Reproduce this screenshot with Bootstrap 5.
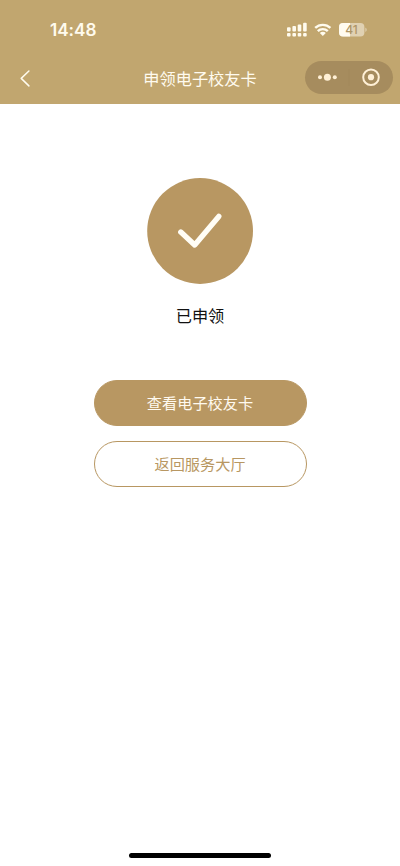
<!DOCTYPE html>
<html lang="zh-CN">
<head>
<meta charset="utf-8">
<meta name="viewport" content="width=device-width, initial-scale=1">
<title>申领电子校友卡</title>
<link href="https://cdn.jsdelivr.net/npm/bootstrap@5.3.0/dist/css/bootstrap.min.css" rel="stylesheet">
<style>
  :root { --gold: #b89762; --bar: #c1a66f; }
  body { font-family: "Noto Sans CJK SC", sans-serif; height: 866px; overflow: hidden; }
  .top-area { background: var(--bar); height: 103.5px; }
  .status-row { height: 54px; padding: 6px 32px 0 50px; }
  .clock { font: 600 17.2px/1 Inter, sans-serif; letter-spacing: -.05px; color: #fffbee; }
  .title-row { display: grid; grid-template-columns: 95px 1fr 95px; height: 47px; padding: 0 7px 0 13px; }
  .page-title { font-size: 16.2px; line-height: 24px; color: #fffbef; padding-right: 6px; }
  .capsule { width: 88px; height: 33px; background: #a68c5e; }
  .result-area { padding-top: 74px; }
  .result-label { font-size: 16.2px; line-height: 24px; margin-top: 19px; color: #111; }
  .actions { width: 213px; margin-top: 53.5px; gap: 15px; }
  .btn-gold { --bs-btn-padding-y: 0; --bs-btn-font-size: 15.2px; --bs-btn-border-color: var(--gold); height: 46px; line-height: 42px; padding-bottom: 2px; }
  .btn-fill { --bs-btn-bg: var(--gold); --bs-btn-color: #fffaf0; --bs-btn-hover-bg: #a98854; --bs-btn-hover-color: #fff; }
  .btn-line { --bs-btn-bg: #fff; --bs-btn-color: var(--gold); --bs-btn-hover-bg: #faf6ee; --bs-btn-hover-color: var(--gold); }
  .home-bar { width: 142px; height: 5px; background: #000; margin-bottom: 8px; }
</style>
</head>
<body class="d-flex flex-column bg-white">
<header class="top-area flex-shrink-0">
  <div class="status-row d-flex align-items-center justify-content-between">
    <span class="clock">14:48</span>
    <svg width="82" height="16" viewBox="286 22 82 16" role="img" aria-label="信号与电量">
      <g fill="#fffbee">
        <rect x="287" y="27.2" width="3.6" height="4.3" rx="1"/>
        <rect x="292.4" y="26" width="3.6" height="5.5" rx="1"/>
        <rect x="297.7" y="24.5" width="3.6" height="7" rx="1"/>
        <rect x="303.1" y="22.8" width="3.6" height="8.7" rx="1"/>
        <rect x="287" y="33" width="3.6" height="3.6" rx="1"/>
        <rect x="292.4" y="33" width="3.6" height="3.6" rx="1"/>
        <rect x="297.7" y="33" width="3.6" height="3.6" rx="1"/>
        <rect x="303.1" y="33" width="3.6" height="3.6" rx="1"/>
        <path d="M319.8 33a4.2 4.2 0 0 1 6 0L322.8 36z"/>
      </g>
      <g fill="none" stroke="#fffbee" stroke-width="2.4">
        <path d="M315.2 27.9a11 11 0 0 1 15.2 0"/>
        <path d="M317.8 31.1a7.2 7.2 0 0 1 10 0"/>
      </g>
      <rect x="339" y="23" width="25.4" height="13.5" rx="4" fill="#e0d1b2"/>
      <path d="M343 23h7v13.5h-7a4 4 0 0 1-4-4V27a4 4 0 0 1 4-4z" fill="#fffbf0"/>
      <path d="M365.4 27.5q2.6 2.2 0 4.6z" fill="#e0d1b2"/>
      <text x="351.5" y="34.1" text-anchor="middle" font-family="Inter, sans-serif" font-size="12" font-weight="500" fill="#ae9566">41</text>
    </svg>
  </div>
  <nav class="title-row align-items-center" aria-label="导航">
    <a href="#" class="d-flex ps-1" aria-label="返回">
      <svg width="16" height="20" viewBox="0 0 16 20" fill="none" stroke="#fffbee" stroke-width="1.5" stroke-linecap="round" stroke-linejoin="round"><path d="M11.9 3 4.2 10.4 11.9 17.9"/></svg>
    </a>
    <h1 class="page-title fw-normal text-center text-nowrap mb-0">申领电子校友卡</h1>
    <div class="capsule rounded-pill ms-auto">
      <svg class="d-block" width="88" height="33" viewBox="0 0 88 33">
        <g fill="#fff0d6"><circle cx="15" cy="16.2" r="2"/><circle cx="22.4" cy="16.2" r="3.5"/><circle cx="29.8" cy="16.2" r="2"/><circle cx="66" cy="16.2" r="3.1"/></g>
        <circle cx="66" cy="16.2" r="7.8" fill="none" stroke="#fff0d6" stroke-width="2"/>
        <path d="M44 8v17" stroke="#a0875a" stroke-width=".7"/>
      </svg>
    </div>
  </nav>
</header>
<main class="result-area d-flex flex-column align-items-center flex-grow-1">
  <svg class="flex-shrink-0" width="106" height="106" viewBox="0 0 106 106" role="img" aria-label="完成">
    <circle cx="53.1" cy="53" r="52.9" fill="#b89762"/>
    <path d="M33.8 54 47.7 67 71.8 38.4" fill="none" stroke="#fffdf5" stroke-width="5.4" stroke-linecap="round" stroke-linejoin="round"/>
  </svg>
  <p class="result-label text-center mb-0">已申领</p>
  <div class="actions d-flex flex-column">
    <button type="button" class="btn btn-gold btn-fill rounded-pill">查看电子校友卡</button>
    <button type="button" class="btn btn-gold btn-line rounded-pill">返回服务大厅</button>
  </div>
</main>
<div class="home-bar rounded-pill mx-auto flex-shrink-0"></div>
<script src="https://cdn.jsdelivr.net/npm/bootstrap@5.3.0/dist/js/bootstrap.bundle.min.js"></script>
</body>
</html>
